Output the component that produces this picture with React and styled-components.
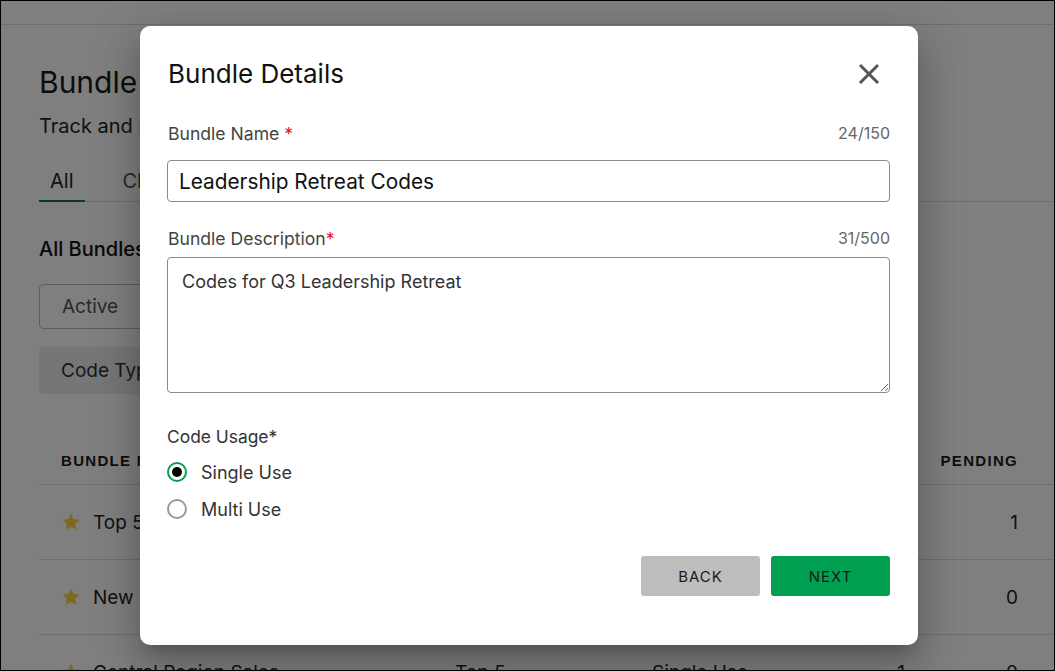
import React, { useState } from "react";
import styled, { createGlobalStyle } from "styled-components";

const GlobalStyle = createGlobalStyle`
  html, body {
    margin: 0;
    padding: 0;
    background: #fff;
  }
  * {
    box-sizing: border-box;
  }
  body {
    font-family: Inter, "Noto Sans", "Liberation Sans", sans-serif;
    color: #111;
  }
`;

const rows = [
  { name: "Top 5 Sales Leaders", type: "Top 5", usage: "Single Use", total: 3, pending: 1 },
  { name: "New Hire Welcome", type: "Onboarding", usage: "Multi Use", total: 2, pending: 0 },
  { name: "Central Region Sales", type: "Top 5", usage: "Single Use", total: 1, pending: 0 },
];

export default function App() {
  const [usage, setUsage] = useState("single");
  const name = "Leadership Retreat Codes";
  const desc = "Codes for Q3 Leadership Retreat";

  return (
    <>
      <GlobalStyle />
      <S.Frame>
        <S.TopBar />
        <S.Main>
          <S.PageTitle>Bundle Management</S.PageTitle>
          <S.Subtitle>Track and manage your code bundles</S.Subtitle>
          <S.Tabs>
            <S.Tab $active>All</S.Tab>
            <S.Tab>Claimed</S.Tab>
            <S.Tab>Unclaimed</S.Tab>
          </S.Tabs>
          <S.SectionTitle>All Bundles</S.SectionTitle>
          <S.Segmented>
            <S.Segment>Active</S.Segment>
            <S.Segment>Archived</S.Segment>
          </S.Segmented>
          <S.Chip>Code Type</S.Chip>
          <S.Table>
            <S.HeadRow>
              <span>Bundle Name</span>
              <span>Code Type</span>
              <span>Usage</span>
              <S.Num>Total</S.Num>
              <S.Num>Pending</S.Num>
            </S.HeadRow>
            {rows.map((r) => (
              <S.Row key={r.name}>
                <S.NameCell>
                  <S.Star viewBox="0 0 24 24">
                    <path d="M12 1.8l3.1 6.6 7.2.9-5.3 5 1.4 7.1L12 17.9l-6.4 3.5 1.4-7.1-5.3-5 7.2-.9z" />
                  </S.Star>
                  {r.name}
                </S.NameCell>
                <span>{r.type}</span>
                <span>{r.usage}</span>
                <S.Num>{r.total}</S.Num>
                <S.Num>{r.pending}</S.Num>
              </S.Row>
            ))}
          </S.Table>
        </S.Main>

        <S.Backdrop />
        <S.Modal role="dialog" aria-label="Bundle Details">
          <S.ModalHead>
            <S.ModalTitle>Bundle Details</S.ModalTitle>
            <S.CloseButton aria-label="Close">
              <svg width="22" height="22" viewBox="0 0 22 22">
                <path d="M2 2L20 20M20 2L2 20" stroke="#555" strokeWidth="3" strokeLinecap="butt" />
              </svg>
            </S.CloseButton>
          </S.ModalHead>

          <S.LabelRow>
            <S.Label>
              Bundle Name <S.Req>*</S.Req>
            </S.Label>
            <S.Counter>{name.length}/150</S.Counter>
          </S.LabelRow>
          <S.Input defaultValue={name} />

          <S.LabelRow $top={25} $gap={8}>
            <S.Label>
              Bundle Description<S.Req>*</S.Req>
            </S.Label>
            <S.Counter>{desc.length}/500</S.Counter>
          </S.LabelRow>
          <S.TextArea defaultValue={desc} />

          <S.UsageLabel>Code Usage*</S.UsageLabel>
          <S.RadioGroup>
            <S.RadioRow onClick={() => setUsage("single")}>
              <S.Radio $checked={usage === "single"} />
              Single Use
            </S.RadioRow>
            <S.RadioRow onClick={() => setUsage("multi")}>
              <S.Radio $checked={usage === "multi"} />
              Multi Use
            </S.RadioRow>
          </S.RadioGroup>

          <S.Actions>
            <S.Button $variant="back">Back</S.Button>
            <S.Button $variant="next">Next</S.Button>
          </S.Actions>
        </S.Modal>
      </S.Frame>
    </>
  );
}

const S = {
  Frame: styled.div`
    position: relative;
    width: 1055px;
    height: 671px;
    border: 1px solid #000;
    overflow: hidden;
    background: #fff;
  `,
  TopBar: styled.div`
    height: 24px;
    border-bottom: 1px solid #dcdcdc;
  `,
  Main: styled.div`
    padding-left: 38px;
    display: flex;
    flex-direction: column;
    align-items: flex-start;
  `,
  PageTitle: styled.h1`
    margin: 39px 0 0;
    font-size: 30px;
    line-height: 36px;
    font-weight: 400;
    color: #1a1a1a;
  `,
  Subtitle: styled.p`
    margin: 13px 0 0;
    font-size: 20px;
    line-height: 26px;
    color: #222;
  `,
  Tabs: styled.div`
    margin-top: 21px;
    align-self: stretch;
    display: flex;
    border-bottom: 1px solid #dcdcdc;
  `,
  Tab: styled.div`
    padding: 8px 11px 6px;
    margin-right: 27px;
    font-size: 20px;
    line-height: 26px;
    color: ${(p) => (p.$active ? "#222" : "#555")};
    border-bottom: 2px solid ${(p) => (p.$active ? "#0a7a3d" : "transparent")};
    margin-bottom: -1px;
  `,
  SectionTitle: styled.h2`
    margin: 34px 0 0;
    font-size: 20px;
    line-height: 26px;
    font-weight: 500;
    color: #111;
  `,
  Segmented: styled.div`
    margin-top: 22px;
    display: flex;
    height: 45px;
    border: 1px solid #bbb;
    border-radius: 4px;
  `,
  Segment: styled.div`
    display: flex;
    align-items: center;
    padding: 0 22px;
    font-size: 19px;
    color: #555;
    & + & {
      border-left: 1px solid #bbb;
    }
  `,
  Chip: styled.div`
    margin-top: 18px;
    height: 47px;
    width: 220px;
    display: flex;
    align-items: center;
    padding: 0 22px;
    font-size: 19px;
    color: #333;
    background: #ededed;
    border-radius: 4px;
  `,
  Table: styled.div`
    margin-top: 43px;
    align-self: stretch;
  `,
  HeadRow: styled.div`
    display: grid;
    grid-template-columns: 394px 197px 1fr 100px 113px;
    align-items: center;
    height: 48px;
    padding: 0 36px 0 22px;
    border-bottom: 1px solid #dcdcdc;
    font-family: "Liberation Sans", Arial, sans-serif;
    font-size: 15px;
    font-weight: 700;
    letter-spacing: 1.3px;
    text-transform: uppercase;
    color: #1a1a1a;
  `,
  Row: styled.div`
    display: grid;
    grid-template-columns: 394px 197px 1fr 100px 113px;
    align-items: center;
    height: 75px;
    padding: 0 36px 0 22px;
    border-bottom: 1px solid #dcdcdc;
    font-size: 19px;
    color: #222;
  `,
  NameCell: styled.span`
    display: flex;
    align-items: center;
    gap: 12px;
  `,
  Star: styled.svg`
    width: 20px;
    height: 20px;
    fill: #ffd040;
  `,
  Num: styled.span`
    text-align: right;
  `,
  Backdrop: styled.div`
    position: absolute;
    inset: 0;
    background: rgba(0, 0, 0, 0.5);
  `,
  Modal: styled.div`
    position: absolute;
    left: 139px;
    top: 25px;
    width: 778px;
    height: 619px;
    padding: 28px 28px 0 27px;
    background: #fff;
    border-radius: 10px;
    box-shadow: 0 11px 15px -7px rgba(0, 0, 0, 0.2), 0 24px 38px 3px rgba(0, 0, 0, 0.14),
      0 9px 46px 8px rgba(0, 0, 0, 0.12);
    display: flex;
    flex-direction: column;
  `,
  ModalHead: styled.div`
    height: 40px;
    display: flex;
    align-items: center;
    justify-content: space-between;
  `,
  ModalTitle: styled.h2`
    margin: 0 0 0 1px;
    font-size: 26px;
    line-height: 32px;
    font-weight: 400;
    color: #111;
  `,
  CloseButton: styled.button`
    width: 22px;
    height: 22px;
    padding: 0;
    margin-right: 10px;
    border: 0;
    background: none;
    display: flex;
    cursor: pointer;
  `,
  LabelRow: styled.div`
    margin-top: ${(p) => p.$top ?? 28}px;
    margin-bottom: ${(p) => p.$gap ?? 16}px;
    height: 22px;
    display: flex;
    align-items: center;
    justify-content: space-between;
    padding-left: 1px;
  `,
  Label: styled.label`
    font-size: 17.6px;
    color: #444;
  `,
  Req: styled.span`
    color: #e8112d;
  `,
  Counter: styled.span`
    font-size: 16px;
    color: #666;
  `,
  Input: styled.input`
    height: 42px;
    width: 100%;
    padding: 0 11px;
    border: 1px solid #8a8a8a;
    border-radius: 4px;
    font-family: inherit;
    font-size: 20.8px;
    color: #111;
    outline: none;
  `,
  TextArea: styled.textarea`
    height: 136px;
    width: 100%;
    padding: 12px 14px;
    border: 1px solid #8a8a8a;
    border-radius: 4px;
    font-family: inherit;
    font-size: 18px;
    line-height: 24px;
    color: #333;
    outline: none;
  `,
  UsageLabel: styled.div`
    margin-top: 33px;
    height: 22px;
    line-height: 22px;
    font-size: 17.4px;
    color: #333;
  `,
  RadioGroup: styled.div`
    margin-top: 9px;
    display: flex;
    flex-direction: column;
    gap: 7px;
  `,
  RadioRow: styled.div`
    height: 30px;
    display: flex;
    align-items: center;
    gap: 14px;
    font-size: 18px;
    color: #333;
    cursor: pointer;
  `,
  Radio: styled.span`
    width: 20px;
    height: 20px;
    border-radius: 50%;
    border: 2px solid ${(p) => (p.$checked ? "#0a9d50" : "#999")};
    display: flex;
    align-items: center;
    justify-content: center;
    &::after {
      content: "";
      width: 10px;
      height: 10px;
      border-radius: 50%;
      background: ${(p) => (p.$checked ? "#000" : "transparent")};
    }
  `,
  Actions: styled.div`
    margin-top: 32px;
    display: flex;
    justify-content: flex-end;
    gap: 11px;
  `,
  Button: styled.button`
    width: 119px;
    height: 40px;
    border: 0;
    border-radius: 3px;
    font-family: inherit;
    font-size: 15px;
    letter-spacing: 1px;
    text-transform: uppercase;
    color: #1a1a1a;
    background: ${(p) => (p.$variant === "next" ? "#00a050" : "#bdbdbd")};
    cursor: pointer;
  `,
};
